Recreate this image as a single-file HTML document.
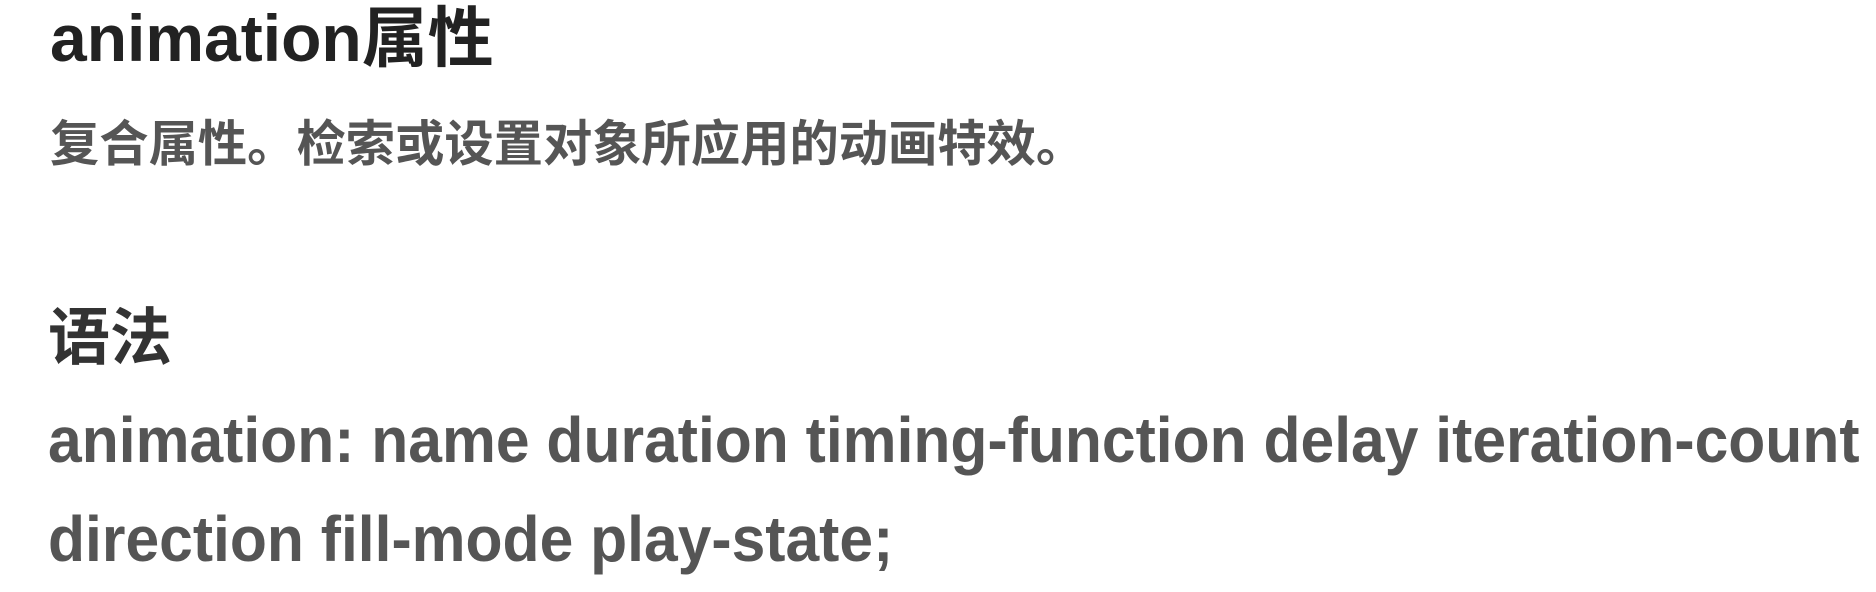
<!DOCTYPE html>
<html><head><meta charset="utf-8"><style>
html,body{margin:0;padding:0;background:#fff;width:1876px;height:592px;overflow:hidden;}
div{position:absolute;white-space:nowrap;line-height:1;font-family:"Liberation Sans","Noto Sans CJK SC",sans-serif;font-weight:bold;}
.t{left:50px;top:5px;font-size:66px;color:#222;}
.s{left:50px;top:120px;font-size:49.3px;color:#555;}
.h{left:48px;top:308px;font-size:62px;color:#333;}
.l{left:48px;font-size:64px;color:#555;transform-origin:0 0;transform:scaleX(0.947);}
</style></head><body>
<div class="t">animation属性</div>
<div class="s">复合属性。检索或设置对象所应用的动画特效。</div>
<div class="h">语法</div>
<div class="l" style="top:408px">animation: name duration timing-function delay iteration-count</div>
<div class="l" style="top:507px">direction fill-mode play-state;</div>
</body></html>
